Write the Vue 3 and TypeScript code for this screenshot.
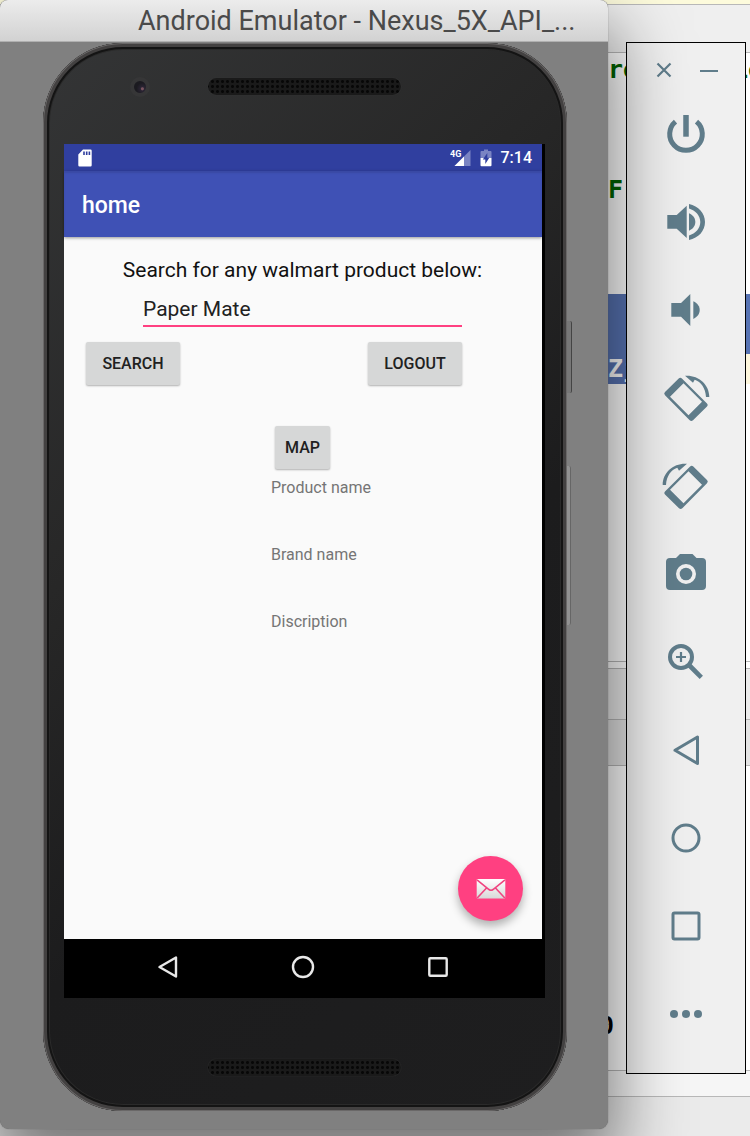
<script setup lang="ts">
import { ref } from 'vue'

const query = ref('Paper Mate')
const details: string[] = ['Product name', 'Brand name', 'Discription']
</script>

<template>
  <div class="desktop">
    <div class="editor" aria-hidden="true">
      <div class="band tab-strip"></div>
      <div class="band breadcrumbs"></div>
      <div class="band code">
        <div class="code-line first"><span class="before">re</span><span class="after">Le</span></div>
        <div class="code-line second"><span class="before">Fr</span><span class="after"></span></div>
        <div class="selection">
          <span class="before selected">Zj</span>
          <span class="after caret-row"></span>
        </div>
      </div>
      <div class="band divider"></div>
      <div class="band panel-tabs"></div>
      <div class="band panel-head"></div>
      <div class="band console"><div class="code-line"><span class="before exit">0</span></div></div>
      <div class="band tool-strip"></div>
      <div class="band status"><span>g</span></div>
    </div>

    <main class="window">
      <header class="title-bar">Android Emulator - Nexus_5X_API_...</header>
      <div class="stage">
        <div class="phone">
          <i class="side-key power-key"></i>
          <i class="side-key volume-key"></i>
          <div class="phone-top">
            <span class="camera"></span>
            <span class="grille"></span>
          </div>
          <div class="screen">
            <div class="app">
              <div class="status-bar">
                <svg class="sd" width="14" height="18" viewBox="0 0 14 18">
                  <path fill="#fff" d="M5 .5h7.500a1.2 1.2 0 0 1 1.2 1.2v14.600a1.2 1.2 0 0 1-1.2 1.2h-11A1.2 1.2 0 0 1 .3 16.300V5.500z" />
                  <path stroke="#303f9f" stroke-width="1.600" d="M6 2.500v3.500M8.700 2.500v3.500M11.400 2.500v3.500" />
                </svg>
                <div class="indicators">
                  <svg width="21" height="18" viewBox="0 0 21 18">
                    <path fill="#7a84c3" d="M20.500 1v16h-16z" />
                    <path fill="#fff" d="M14 7.500V17H4.500z" />
                    <text x="0" y="8" class="network">4G</text>
                  </svg>
                  <svg width="12" height="18" viewBox="0 0 12 18">
                    <path fill="#7a84c3" d="M4 .5h4v1.500h2.500a1 1 0 0 1 1 1V9H.5V3a1 1 0 0 1 1-1H4z" />
                    <path fill="#fff" d="M.5 9h11v7.300a1 1 0 0 1-1 1h-9a1 1 0 0 1-1-1z" />
                    <path fill="#303f9f" d="M7.300 4 2.800 10.500h2.500V15l4-6.200H7.300z" />
                  </svg>
                  <span class="clock">7:14</span>
                </div>
              </div>
              <h1 class="app-bar">home</h1>
              <form class="content" @submit.prevent>
                <label for="query">Search for any walmart product below:</label>
                <input id="query" v-model="query" type="text" />
                <div class="actions">
                  <button type="submit" class="raised">SEARCH</button>
                  <button type="button" class="raised">LOGOUT</button>
                </div>
                <button type="button" class="raised map">MAP</button>
                <div class="details">
                  <p v-for="item in details" :key="item">{{ item }}</p>
                </div>
                <button type="button" class="fab" aria-label="Send mail">
                  <svg width="30" height="22" viewBox="0 0 30 22">
                    <defs>
                      <linearGradient id="paper" x1="0" y1="0" x2="0" y2="1">
                        <stop offset="0" stop-color="#fff" />
                        <stop offset="1" stop-color="#d8d8d8" />
                      </linearGradient>
                    </defs>
                    <rect x=".7" y="1" width="28.600" height="19.600" rx="1" fill="url(#paper)" />
                    <path fill="none" stroke="#f04480" stroke-width="1.600" d="M1 1.800 13 11.500q2 1.500 4 0L29 1.800M1.200 20 10.500 10M28.800 20 19.500 10" />
                  </svg>
                </button>
              </form>
              <nav class="nav-bar">
                <button type="button" aria-label="Back">
                  <svg width="24" height="24" viewBox="0 0 24 24"><path d="M3.500 12 20 2.500v19z" /></svg>
                </button>
                <button type="button" aria-label="Home">
                  <svg width="24" height="24" viewBox="0 0 24 24"><circle cx="12" cy="12" r="10" /></svg>
                </button>
                <button type="button" aria-label="Overview">
                  <svg width="24" height="24" viewBox="0 0 24 24"><rect x="3.300" y="3.300" width="17.400" height="17.400" rx="1" /></svg>
                </button>
              </nav>
            </div>
          </div>
          <div class="phone-bottom"><span class="grille"></span></div>
        </div>
      </div>
    </main>

    <aside class="toolbar">
      <div class="controls">
        <button type="button" aria-label="Close">
          <svg width="18" height="18" viewBox="0 0 18 18"><path class="line" stroke-width="2.200" d="m2.500 2.500 13 13m0-13-13 13" /></svg>
        </button>
        <button type="button" aria-label="Minimize">
          <svg width="18" height="18" viewBox="0 0 18 18"><path class="line" stroke-width="2" d="M0 10h18" /></svg>
        </button>
      </div>
      <button type="button" class="tool" aria-label="Power">
        <svg viewBox="0 0 48 48">
          <path class="line" stroke-width="5" d="M13.500 11.600a16.300 16.300 0 1 0 21 0" />
          <path class="line" stroke-width="5.500" d="M24 5v21.700" />
        </svg>
      </button>
      <button type="button" class="tool" aria-label="Volume up">
        <svg viewBox="0 0 48 48">
          <path d="M5.300 17h9.400l10-9.300V40l-10-9.300H5.300z" />
          <path d="M27 15.300c4.500 2.200 6.300 5.200 6.300 8.700S31.500 30.500 27 32.700z" />
          <path d="M27 6c9.500 2 16 9 16 18s-6.500 16-16 18v-4.500c6.500-2 11.300-7 11.300-13.500S33.500 12.500 27 10.500z" />
        </svg>
      </button>
      <button type="button" class="tool" aria-label="Volume down">
        <svg viewBox="0 0 48 48">
          <path d="M9.300 17H19l9.300-9v32L19 30.700H9.300z" />
          <path d="M31.300 15.300c4.500 2.200 6.400 5.200 6.400 8.800s-1.900 6.600-6.400 8.900z" />
        </svg>
      </button>
      <button type="button" class="tool" aria-label="Rotate left">
        <svg viewBox="0 0 48 48">
          <path fill-rule="evenodd" d="M3 18 16.700 4.500q1.600-1.600 3.200 0L45 29.400q1.600 1.600 0 3.200L31 46.200q-1.700 1.600-3.300 0L3 21.200q-1.600-1.600 0-3.200zM8 22.700l18.500 18.500L40 27.700 21.500 9.200z" />
          <path d="M23 1.700C36 .7 47.300 10 47.300 23H44c-.5-9-5-15-11.300-17.200L31 8.700z" />
        </svg>
      </button>
      <button type="button" class="tool" aria-label="Rotate right">
        <svg viewBox="0 0 48 48">
          <g transform="translate(48 0) scale(-1 1)">
            <path fill-rule="evenodd" d="M3 18 16.700 4.500q1.600-1.600 3.200 0L45 29.400q1.600 1.600 0 3.200L31 46.200q-1.700 1.600-3.300 0L3 21.200q-1.600-1.600 0-3.200zM8 22.700l18.500 18.500L40 27.700 21.500 9.200z" />
            <path d="M23 1.700C36 .7 47.300 10 47.300 23H44c-.5-9-5-15-11.300-17.200L31 8.700z" />
          </g>
        </svg>
      </button>
      <button type="button" class="tool" aria-label="Take screenshot">
        <svg viewBox="0 0 48 48">
          <path fill-rule="evenodd" d="M18 4h12.500l4 4H40a4 4 0 0 1 4 4v24a4 4 0 0 1-4 4H8a4 4 0 0 1-4-4V12a4 4 0 0 1 4-4h6zM24 14a10 10 0 1 0 0 20 10 10 0 0 0 0-20z" />
          <circle cx="24" cy="24" r="6.300" />
        </svg>
      </button>
      <button type="button" class="tool" aria-label="Zoom">
        <svg viewBox="0 0 48 48">
          <circle class="line" cx="19" cy="19" r="11" stroke-width="4" />
          <path class="line" stroke-width="2.200" d="M14 19h10M19 14v10" />
          <path class="line" stroke-width="4.600" d="m27.500 27.500 11.800 11.800" />
        </svg>
      </button>
      <button type="button" class="tool" aria-label="Back">
        <svg viewBox="0 0 48 48"><path class="line" stroke-width="3" stroke-linejoin="round" d="M13 24.300 35.500 11v26.500z" /></svg>
      </button>
      <button type="button" class="tool" aria-label="Home">
        <svg viewBox="0 0 48 48"><circle class="line" cx="24" cy="24" r="13" stroke-width="3" /></svg>
      </button>
      <button type="button" class="tool" aria-label="Overview">
        <svg viewBox="0 0 48 48"><rect class="line" x="11" y="11" width="26" height="26" rx="1.500" stroke-width="3" /></svg>
      </button>
      <button type="button" class="tool" aria-label="More">
        <svg viewBox="0 0 48 48"><circle cx="12" cy="24" r="4" /><circle cx="24" cy="24" r="4" /><circle cx="36" cy="24" r="4" /></svg>
      </button>
    </aside>
  </div>
</template>

<style>
body {
  margin: 0;
}
</style>

<style scoped>
.desktop {
  position: relative;
  display: grid;
  grid-template-columns: minmax(0, 1fr) 120px;
  column-gap: 18px;
  align-items: start;
  box-sizing: border-box;
  min-height: 100vh;
  padding: 0 4px 7px 0;
  overflow: hidden;
  font-family: Roboto, "Liberation Sans", sans-serif;
}

button {
  margin: 0;
  padding: 0;
  border: 0;
  background: none;
  font: inherit;
  cursor: pointer;
}

svg {
  display: block;
}

/* Editor behind the emulator */
.editor {
  position: absolute;
  inset: 0;
  display: flex;
  flex-direction: column;
  background: #fff;
  font: bold 25px/30px "DejaVu Sans Mono", monospace;
  color: #006400;
}

.band {
  box-sizing: border-box;
  border-bottom: 1px solid #b8b8b8;
}

.tab-strip {
  height: 5px;
  background: #fdfbdc;
}

.breadcrumbs {
  height: 48px;
  background: #efefef;
}

.code {
  height: 609px;
}

.code-line,
.selection {
  display: flex;
  justify-content: flex-end;
  height: 30px;
}

.before {
  width: 126px;
}

.after {
  width: 16px;
  text-indent: -1px;
}

.first {
  margin-top: 2px;
}

.second {
  margin-top: 90px;
}

.selection {
  height: 90px;
  margin-top: 89px;
  color: #fff;
}

.selected {
  box-sizing: border-box;
  padding-top: 60px;
  background: #5874b4;
}

.caret-row {
  background: linear-gradient(#5874b4 60px, #fdf6dc 60px);
}

.divider {
  height: 7px;
}

.panel-tabs {
  height: 51px;
  background: #ececec;
}

.panel-head {
  height: 46px;
  background: #e4e4e4;
}

.console {
  height: 305px;
  padding-top: 245px;
  color: #000;
}

.exit {
  width: 151px;
}

.tool-strip {
  height: 26px;
  background: #f6f6f6;
}

.status {
  flex: 1;
  padding: 7px 0 0 42px;
  border: 0;
  background: #ebebeb;
  color: #000;
  line-height: 24px;
}

/* Emulator window */
.window {
  position: relative;
  z-index: 2;
  border-radius: 8px 8px 9px 9px;
  background: #808080;
  box-shadow: 0 0 1px #555, 0 34px 70px 8px rgba(0, 0, 0, 0.5);
}

.title-bar {
  box-sizing: border-box;
  height: 42px;
  padding-left: 138px;
  overflow: hidden;
  border-bottom: 1px solid #b0b0b0;
  border-radius: 8px 8px 0 0;
  background: linear-gradient(#ececec, #d2d2d2);
  color: #4a4a4a;
  font-size: 27px;
  line-height: 42px;
  white-space: nowrap;
}

.stage {
  padding: 1px 41px 18px 43px;
}

.phone {
  position: relative;
  box-sizing: border-box;
  padding: 0 22px 0 21px;
  border-radius: 80px;
  background: linear-gradient(135deg, #343536, #272727 35%, #1c1c1d 60%, #1e1e1f);
  box-shadow:
    inset 0 0 0 1px #6a6868,
    inset 0 0 0 4px #434141,
    inset 0 0 0 6px #141414,
    inset 0 0 0 7px #2a2a2a;
}

.side-key {
  position: absolute;
  left: 100%;
  box-sizing: border-box;
  width: 5px;
  border: solid #444;
  border-width: 0 1px 0 0;
  border-radius: 0 2px 2px 0;
  background: #777;
}

.power-key {
  top: 278px;
  height: 72px;
}

.volume-key {
  top: 423px;
  width: 4px;
  height: 159px;
  border-color: #666;
  background: #929292;
}

.phone-top {
  display: grid;
  grid-template-columns: 1fr 193px 1fr;
  align-items: center;
  box-sizing: border-box;
  height: 101px;
  padding-bottom: 14px;
}

.camera {
  width: 12px;
  height: 12px;
  margin-left: 66px;
  border: 4px solid #363637;
  border-radius: 50%;
  background: radial-gradient(circle at 70% 65%, #7a5460 0 1px, #2a2433 2px, #1b1a20 6px);
}

.grille {
  height: 17px;
  border-radius: 9px;
  background: radial-gradient(circle, #070707 1px, #1a1a1a 2px) 2px 1px / 5px 5px;
  box-shadow: 0 0 1px #444;
}

.phone-bottom {
  display: grid;
  grid-template-columns: 193px;
  justify-content: center;
  align-items: center;
  box-sizing: border-box;
  height: 113px;
  padding-top: 26px;
}

/* Android screen */
.screen {
  padding-right: 3px;
  background: #000;
}

.app {
  background: #fafafa;
}

.status-bar {
  display: flex;
  justify-content: space-between;
  align-items: center;
  box-sizing: border-box;
  height: 27px;
  padding: 0 10px 0 14px;
  background: #303f9f;
  color: #fff;
}

.indicators {
  display: flex;
  align-items: center;
  gap: 9px;
}

.network {
  fill: #fff;
  font-size: 9px;
  font-weight: 700;
}

.clock {
  font-size: 16px;
  font-weight: 500;
  line-height: 27px;
}

.app-bar {
  position: relative;
  margin: 0;
  padding: 3px 0 0 18px;
  background: #3f51b5;
  box-shadow: 0 1px 3px rgba(0, 0, 0, 0.4), inset 0 2px 2px rgba(0, 0, 0, 0.1);
  color: #fff;
  font-size: 23px;
  font-weight: 500;
  line-height: 63px;
}

.content {
  position: relative;
  display: flex;
  flex-direction: column;
  align-items: center;
  box-sizing: border-box;
  min-height: 702px;
  padding: 21px 1px 0 0;
}

label {
  color: #111;
  font-size: 21px;
  line-height: 24px;
}

input {
  box-sizing: border-box;
  width: 319px;
  height: 30px;
  margin-top: 15px;
  padding: 0 0 4px;
  border: 0;
  border-bottom: 2px solid #ff4081;
  outline: 0;
  background: none;
  color: #212121;
  font: 21px/24px Roboto, "Liberation Sans", sans-serif;
}

.actions {
  display: flex;
  justify-content: space-between;
  align-self: stretch;
  margin-top: 15px;
  padding: 0 79px 0 22px;
}

.raised {
  width: 94px;
  height: 43px;
  border-radius: 2px;
  background: #d6d7d7;
  box-shadow: 0 1px 2px rgba(0, 0, 0, 0.3);
  color: #212121;
  font-size: 16px;
  font-weight: 500;
}

.map {
  width: 55px;
  margin-top: 41px;
}

.details {
  display: flex;
  flex-direction: column;
  align-self: stretch;
  gap: 47px;
  margin-top: 9px;
  padding-left: 207px;
}

.details p {
  margin: 0;
  color: #757575;
  font-size: 16px;
  line-height: 20px;
}

.fab {
  position: absolute;
  right: 19px;
  bottom: 18px;
  display: grid;
  place-items: center;
  width: 65px;
  height: 65px;
  border-radius: 50%;
  background: #ff4081;
  box-shadow: 0 5px 10px rgba(0, 0, 0, 0.3);
}

.nav-bar {
  display: flex;
  height: 59px;
  padding: 0 37px;
  box-sizing: border-box;
  background: #000;
}

.nav-bar button {
  display: grid;
  flex: 1;
  place-items: center;
  padding-bottom: 3px;
}

.nav-bar svg {
  fill: none;
  stroke: #e8e8e8;
  stroke-width: 2.4;
  stroke-linejoin: round;
}

/* Emulator side toolbar */
.toolbar {
  position: relative;
  display: flex;
  flex-direction: column;
  box-sizing: border-box;
  margin-top: 42px;
  padding-bottom: 15px;
  border: 1px solid #000;
  background: #f0f0f0;
}

.controls {
  display: flex;
  gap: 27px;
  height: 47px;
  padding: 0 0 0 28px;
  align-items: center;
}

.controls button {
  padding-top: 7px;
}

.tool {
  display: grid;
  place-items: center;
  height: 88px;
}

.tool svg {
  width: 48px;
  height: 48px;
}

.toolbar svg {
  fill: #607d8b;
}

.toolbar .line {
  fill: none;
  stroke: #607d8b;
}
</style>
